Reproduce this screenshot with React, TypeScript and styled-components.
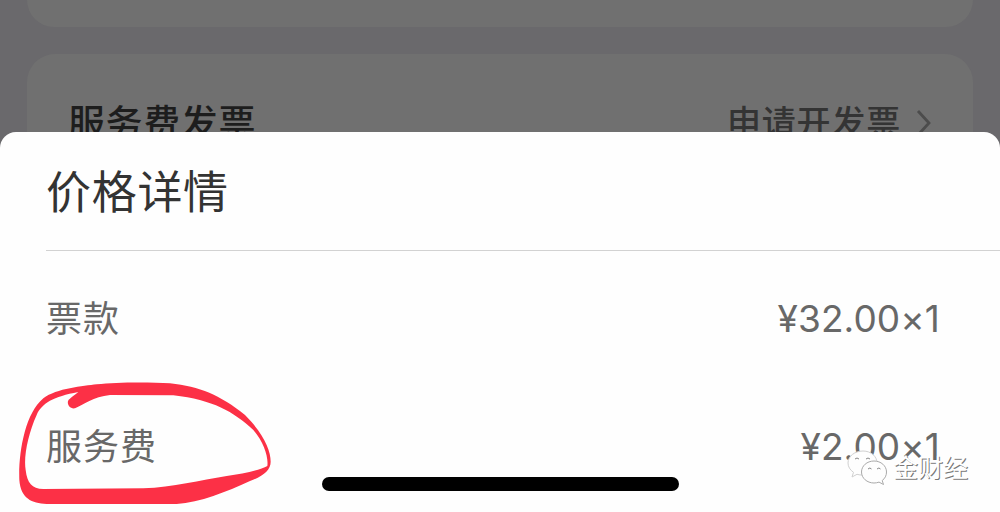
import React from 'react';
import styled, { createGlobalStyle } from 'styled-components';

const GlobalStyle = createGlobalStyle`
  * {
    box-sizing: border-box;
  }

  body {
    margin: 0;
    background: #6a696c;
    font-family: Inter, 'Noto Sans CJK SC', sans-serif;
  }
`;

const Screen = styled.div`
  position: relative;
  display: flex;
  flex-direction: column;
  width: 1000px;
  height: 512px;
  overflow: hidden;
  background: #6a696c;
`;

const Backdrop = styled.div`
  display: flex;
  flex-direction: column;
  gap: 27px;
  height: 132px;
  padding: 0 27px;
`;

const PreviousCard = styled.div`
  flex: 0 0 27px;
  border-radius: 0 0 28px 28px;
  background: #707070;
`;

const InvoiceCard = styled.div`
  display: flex;
  flex: 0 0 130px;
  align-items: flex-start;
  justify-content: space-between;
  padding: 47px 42px 0 41px;
  border-radius: 28px;
  background: #707070;
`;

const InvoiceTitle = styled.div`
  padding-top: 1px;
  font-size: 37px;
  line-height: 44px;
  letter-spacing: 0.6px;
  font-weight: 500;
  color: #1d1d1d;
`;

const InvoiceAction = styled.div`
  display: flex;
  gap: 15px;
  font-size: 34px;
  line-height: 44px;
  letter-spacing: 0.8px;
  font-weight: 500;
  color: #343434;
`;

const Chevron = styled.svg`
  width: 15px;
  height: 28px;
  margin-top: 8px;
`;

const Sheet = styled.div`
  z-index: 1;
  flex: 1;
  border-radius: 16px 16px 0 0;
  background: #fefefe;
`;

const SheetHeader = styled.div`
  height: 119px;
  margin-left: 46px;
  padding-top: 29px;
  border-bottom: 1px solid #d2d2d2;
  font-size: 45px;
  line-height: 64px;
  letter-spacing: 0.7px;
  color: #333;
`;

const PriceRow = styled.div`
  display: flex;
  align-items: center;
  justify-content: space-between;
  height: 128px;
  padding: 6px 60px 0 46px;
  color: #686868;
`;

const PriceLabel = styled.span`
  margin-top: -4px;
  font-size: 36px;
  letter-spacing: 1px;
`;

const PriceValue = styled.span`
  font-size: 37px;
  letter-spacing: 0.1px;
`;

const HomeIndicator = styled.div`
  position: absolute;
  z-index: 2;
  left: 322px;
  bottom: 21px;
  width: 357px;
  height: 14px;
  border-radius: 7px;
  background: #000;
`;

const Marker = styled.svg`
  position: absolute;
  z-index: 2;
  left: 0;
  top: 370px;
  width: 300px;
  height: 142px;
`;

const Watermark = styled.div`
  position: absolute;
  z-index: 3;
  left: 846px;
  top: 449px;
  display: flex;
  align-items: center;
  gap: 5px;
  height: 38px;
`;

const WatermarkText = styled.span`
  font-size: 25px;
  line-height: 38px;
  color: #fff;
  text-shadow: 1px 1px 0 #777;
`;

const prices = [
  { label: '票款', value: '¥32.00×1' },
  { label: '服务费', value: '¥2.00×1' },
];

const WechatIcon = () => (
  <svg width="42" height="38" viewBox="0 0 42 38" fill="#fefefe" strokeWidth="1">
    <path
      d="M17 2C8.700 2 2 7.300 2 14c0 3.800 2.200 7.100 5.500 9.300L6 28l5-2.700c1.900.6 3.900.8 6 .7 8-.3 14-5.500 14-12S25 2 17 2Z"
      stroke="#d0d0d0"
    />
    <path
      d="M28 12c-7 0-12.500 4.900-12.500 11S21 34 28 34c1.800 0 3.500-.3 5-.9l4.500 2.400-1.300-4C39 29.500 40.500 26.500 40.500 23 40.500 16.900 35 12 28 12Z"
      stroke="#aaa"
    />
    <path d="M9 10q2-2 4 0M20 10q2-2 4 0M22 20q2-2 3.500 0M31 20q2-2 3.500 0" fill="none" stroke="#888" />
  </svg>
);

const App: React.FC = () => {
  return (
    <>
      <GlobalStyle />
      <Screen>
        <Backdrop>
          <PreviousCard />
          <InvoiceCard>
            <InvoiceTitle>服务费发票</InvoiceTitle>
            <InvoiceAction>
              申请开发票
              <Chevron viewBox="0 0 15 28" fill="none" stroke="#4c4c4c" strokeWidth="2.800">
                <path d="M2 2l11 12L2 26" />
              </Chevron>
            </InvoiceAction>
          </InvoiceCard>
        </Backdrop>

        <Sheet>
          <SheetHeader>价格详情</SheetHeader>
          {prices.map(price => (
            <PriceRow key={price.label}>
              <PriceLabel>{price.label}</PriceLabel>
              <PriceValue>{price.value}</PriceValue>
            </PriceRow>
          ))}
        </Sheet>

        <HomeIndicator />

        {/* hand-drawn circle around the service fee */}
        <Marker viewBox="0 0 900 426">
          <path
            fill="#fc3046"
            fillRule="evenodd"
            d="M290 43C350 36 450 36 510 40C600 50 660 75 735 135C790 190 812 240 812 275C812 300 790 318 750 333C680 365 600 398 530 402L140 402C95 400 62 385 58 330C55 250 75 130 130 85C170 55 250 48 290 43Z
               M235 66C160 80 125 100 110 135C85 190 70 260 77 300C82 340 95 356 130 357L430 355C520 352 600 330 680 318C730 312 780 300 802 288C806 260 790 215 760 180C700 125 640 90 520 76L330 75C280 80 250 105 225 115C205 118 198 95 208 88C215 80 225 74 235 66Z"
          />
        </Marker>

        <Watermark>
          <WechatIcon />
          <WatermarkText>金财经</WatermarkText>
        </Watermark>
      </Screen>
    </>
  );
};

export default App;
